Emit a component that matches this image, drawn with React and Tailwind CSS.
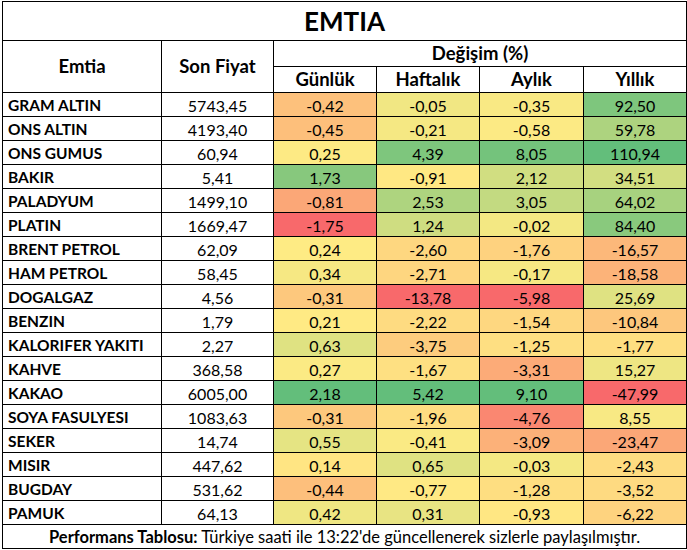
import React from "react";

const rows = [
  ["GRAM ALTIN", "5743,45", -0.42, -0.05, -0.35, 92.5],
  ["ONS ALTIN", "4193,40", -0.45, -0.21, -0.58, 59.78],
  ["ONS GUMUS", "60,94", 0.25, 4.39, 8.05, 110.94],
  ["BAKIR", "5,41", 1.73, -0.91, 2.12, 34.51],
  ["PALADYUM", "1499,10", -0.81, 2.53, 3.05, 64.02],
  ["PLATIN", "1669,47", -1.75, 1.24, -0.02, 84.4],
  ["BRENT PETROL", "62,09", 0.24, -2.6, -1.76, -16.57],
  ["HAM PETROL", "58,45", 0.34, -2.71, -0.17, -18.58],
  ["DOGALGAZ", "4,56", -0.31, -13.78, -5.98, 25.69],
  ["BENZIN", "1,79", 0.21, -2.22, -1.54, -10.84],
  ["KALORIFER YAKITI", "2,27", 0.63, -3.75, -1.25, -1.77],
  ["KAHVE", "368,58", 0.27, -1.67, -3.31, 15.27],
  ["KAKAO", "6005,00", 2.18, 5.42, 9.1, -47.99],
  ["SOYA FASULYESI", "1083,63", -0.31, -1.96, -4.76, 8.55],
  ["SEKER", "14,74", 0.55, -0.41, -3.09, -23.47],
  ["MISIR", "447,62", 0.14, 0.65, -0.03, -2.43],
  ["BUGDAY", "531,62", -0.44, -0.77, -1.28, -3.52],
  ["PAMUK", "64,13", 0.42, 0.31, -0.93, -6.22],
];

const RED = [248, 105, 107];
const YELLOW = [255, 235, 132];
const GREEN = [99, 190, 123];

const mix = (a, b, t) => a.map((v, i) => Math.round(v + (b[i] - v) * t));

// excel style 3-colour scale, midpoint = 50th percentile
function scale(col) {
  const vals = rows.map((r) => r[col]);
  const s = [...vals].sort((a, b) => a - b);
  const n = s.length;
  const mid = n % 2 ? s[(n - 1) / 2] : (s[n / 2 - 1] + s[n / 2]) / 2;
  const min = s[0];
  const max = s[n - 1];
  return (v) => {
    const c = v >= mid ? mix(YELLOW, GREEN, (v - mid) / (max - mid)) : mix(YELLOW, RED, (mid - v) / (mid - min));
    return `rgb(${c[0]},${c[1]},${c[2]})`;
  };
}

const scales = [2, 3, 4, 5].map(scale);
const fmt = (v) => v.toFixed(2).replace(".", ",");

export default function App() {
  return (
    <div className="w-[687px] h-[550px] bg-white pt-px pl-[2px] font-['Lato',sans-serif] text-black">
      <table className="w-[684px] table-fixed border-collapse border border-black">
        <colgroup>
          <col className="w-[159px]" />
          <col className="w-[112px]" />
          <col className="w-[103px]" />
          <col className="w-[103px]" />
          <col className="w-[104px]" />
          <col className="w-[103px]" />
        </colgroup>
        <thead>
          <tr>
            <th colSpan={6} className="h-[39px] border border-black text-[26px] font-bold leading-none p-0">
              EMTIA
            </th>
          </tr>
          <tr>
            <th rowSpan={2} className="border border-black text-[18.5px] font-bold p-0">Emtia</th>
            <th rowSpan={2} className="border border-black text-[18.5px] font-bold p-0">Son Fiyat</th>
            <th colSpan={4} className="h-[26px] border border-black text-[18.5px] font-bold p-0 leading-none">
              Değişim (%)
            </th>
          </tr>
          <tr>
            {["Günlük", "Haftalık", "Aylık", "Yıllık"].map((h) => (
              <th key={h} className="h-[26px] border border-black text-[18.5px] font-bold p-0 leading-none">
                {h}
              </th>
            ))}
          </tr>
        </thead>
        <tbody>
          {rows.map((r) => (
            <tr key={r[0]}>
              <td className="h-[24px] border border-black px-[5px] pt-[2px] pb-0 text-[15.5px] font-bold leading-none whitespace-nowrap">
                {r[0]}
              </td>
              <td className="h-[24px] border border-black px-0 pt-[2px] pb-0 text-[16px] text-center leading-none">{r[1]}</td>
              {[2, 3, 4, 5].map((c, i) => (
                <td
                  key={c}
                  className="h-[24px] border border-black px-0 pt-[2px] pb-0 text-[16px] text-center leading-none"
                  style={{ backgroundColor: scales[i](r[c]) }}
                >
                  {fmt(r[c])}
                </td>
              ))}
            </tr>
          ))}
          <tr>
            <td colSpan={6} className="h-[24px] border border-black px-0 pt-[2px] pb-0 text-[16.5px] text-center leading-none whitespace-nowrap">
              <b>Performans Tablosu:</b> Türkiye saati ile 13:22'de güncellenerek sizlerle paylaşılmıştır.
            </td>
          </tr>
        </tbody>
      </table>
    </div>
  );
}
